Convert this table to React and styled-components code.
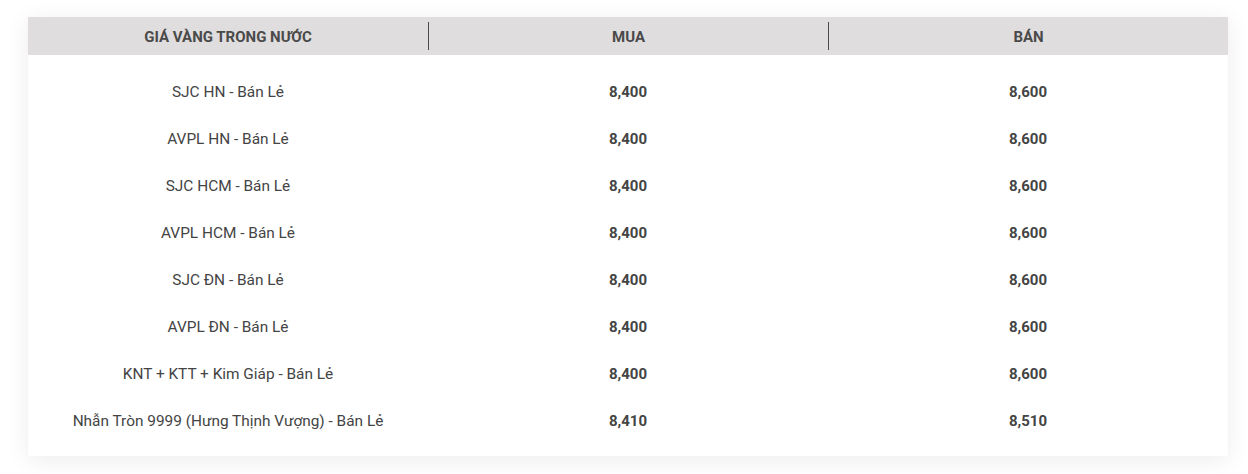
import React from "react";
import styled, { createGlobalStyle } from "styled-components";

const GlobalStyle = createGlobalStyle`
  body {
    margin: 0;
    background: #fff;
    font-family: Roboto, "Liberation Sans", sans-serif;
  }
`;

const Page = styled.div`
  padding: 17px 20px 18px 28px;
`;

const Card = styled.div`
  width: 1200px;
  background: #fff;
  box-shadow: 0 4px 22px rgba(0, 0, 0, 0.08);
`;

const HeadRow = styled.div`
  display: grid;
  grid-template-columns: repeat(3, 1fr);
  height: 38px;
  background: #dfdddd;
  align-items: center;
`;

const HeadCell = styled.div`
  text-align: center;
  font-size: 15px;
  font-weight: 700;
  color: #4a4a4a;
  text-transform: uppercase;
  line-height: 26px;
  padding-top: 2px;
  border-left: ${({ $first }) => ($first ? "none" : "1px solid #4a4a4a")};
`;

const Body = styled.div`
  padding: 13px 0 12px;
`;

const Row = styled.div`
  display: grid;
  grid-template-columns: repeat(3, 1fr);
  height: 47px;
  align-items: center;
`;

const Cell = styled.div`
  text-align: center;
  font-size: ${({ $bold }) => ($bold ? "15px" : "15.4px")};
  color: #444;
  font-weight: ${({ $bold }) => ($bold ? 700 : 400)};
`;

const rows = [
  ["SJC HN - Bán Lẻ", "8,400", "8,600"],
  ["AVPL HN - Bán Lẻ", "8,400", "8,600"],
  ["SJC HCM - Bán Lẻ", "8,400", "8,600"],
  ["AVPL HCM - Bán Lẻ", "8,400", "8,600"],
  ["SJC ĐN - Bán Lẻ", "8,400", "8,600"],
  ["AVPL ĐN - Bán Lẻ", "8,400", "8,600"],
  ["KNT + KTT + Kim Giáp - Bán Lẻ", "8,400", "8,600"],
  ["Nhẫn Tròn 9999 (Hưng Thịnh Vượng) - Bán Lẻ", "8,410", "8,510"],
];

export default function App() {
  return (
    <>
      <GlobalStyle />
      <Page>
        <Card>
          <HeadRow>
            <HeadCell $first>Giá vàng trong nước</HeadCell>
            <HeadCell>Mua</HeadCell>
            <HeadCell>Bán</HeadCell>
          </HeadRow>
          <Body>
            {rows.map(([name, buy, sell]) => (
              <Row key={name}>
                <Cell>{name}</Cell>
                <Cell $bold>{buy}</Cell>
                <Cell $bold>{sell}</Cell>
              </Row>
            ))}
          </Body>
        </Card>
      </Page>
    </>
  );
}
